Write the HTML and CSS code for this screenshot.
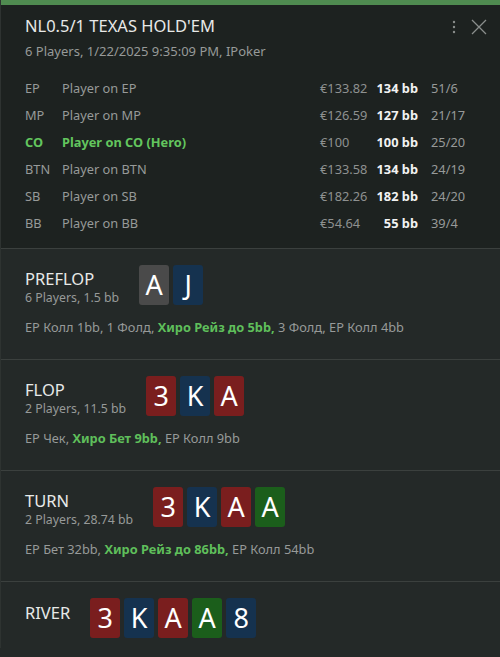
FILE: index.html
```html
<!DOCTYPE html>
<html>
<head>
<meta charset="utf-8">
<link rel="stylesheet" href="styles.css">
</head>
<body>
<div class="panel">
  <div class="topbar"></div>
  <header class="head">
    <div class="head-top">
      <div class="title">NL0.5/1 TEXAS HOLD'EM</div>
      <div class="tools">
        <svg class="dots" width="6" height="14" viewBox="0 0 6 14"><circle cx="3" cy="2" r="1.2" fill="#8a8e8c"/><circle cx="3" cy="7" r="1.2" fill="#8a8e8c"/><circle cx="3" cy="12" r="1.2" fill="#8a8e8c"/></svg>
        <svg class="close" width="16" height="16" viewBox="0 0 16 16"><path d="M1 1L15 15M15 1L1 15" stroke="#8a8e8c" stroke-width="1.3" fill="none"/></svg>
      </div>
    </div>
    <div class="sub">6 Players, 1/22/2025 9:35:09 PM, IPoker</div>
    <div class="players">
      <div class="row"><span class="pos">EP</span><span class="name">Player on EP</span><span class="money">€133.82</span><span class="bb">134 bb</span><span class="stat">51/6</span></div>
      <div class="row"><span class="pos">MP</span><span class="name">Player on MP</span><span class="money">€126.59</span><span class="bb">127 bb</span><span class="stat">21/17</span></div>
      <div class="row hero"><span class="pos">CO</span><span class="name">Player on CO (Hero)</span><span class="money">€100</span><span class="bb">100 bb</span><span class="stat">25/20</span></div>
      <div class="row"><span class="pos">BTN</span><span class="name">Player on BTN</span><span class="money">€133.58</span><span class="bb">134 bb</span><span class="stat">24/19</span></div>
      <div class="row"><span class="pos">SB</span><span class="name">Player on SB</span><span class="money">€182.26</span><span class="bb">182 bb</span><span class="stat">24/20</span></div>
      <div class="row"><span class="pos">BB</span><span class="name">Player on BB</span><span class="money">€54.64</span><span class="bb">55 bb</span><span class="stat">39/4</span></div>
    </div>
  </header>

  <section class="street">
    <div class="street-top">
      <div class="street-info">
        <div class="street-name">PREFLOP</div>
        <div class="street-sub">6 Players, 1.5 bb</div>
      </div>
      <div class="cards"><span class="card gray">A</span><span class="card blue">J</span></div>
    </div>
    <div class="actions">EP Колл 1bb, 1 Фолд, <b>Хиро Рейз до 5bb,</b> 3 Фолд, EP Колл 4bb</div>
  </section>

  <section class="street">
    <div class="street-top">
      <div class="street-info">
        <div class="street-name">FLOP</div>
        <div class="street-sub">2 Players, 11.5 bb</div>
      </div>
      <div class="cards"><span class="card red">3</span><span class="card blue">K</span><span class="card red">A</span></div>
    </div>
    <div class="actions">EP Чек, <b>Хиро Бет 9bb,</b> EP Колл 9bb</div>
  </section>

  <section class="street">
    <div class="street-top">
      <div class="street-info">
        <div class="street-name">TURN</div>
        <div class="street-sub">2 Players, 28.74 bb</div>
      </div>
      <div class="cards"><span class="card red">3</span><span class="card blue">K</span><span class="card red">A</span><span class="card green">A</span></div>
    </div>
    <div class="actions">EP Бет 32bb, <b>Хиро Рейз до 86bb,</b> EP Колл 54bb</div>
  </section>

  <section class="street last">
    <div class="street-top">
      <div class="street-info">
        <div class="street-name river">RIVER</div>
      </div>
      <div class="cards"><span class="card red">3</span><span class="card blue">K</span><span class="card red">A</span><span class="card green">A</span><span class="card blue">8</span></div>
    </div>
  </section>
</div>
</body>
</html>
```

FILE: styles.css
```css
* { box-sizing: border-box; }
html, body { margin: 0; padding: 0; }
body {
  width: 500px;
  height: 657px;
  overflow: hidden;
  background: #242928;
  font-family: "Noto Sans", "Open Sans", sans-serif;
  color: #a0a3a2;
}
.panel {
  width: 500px;
  border-left: 1px solid #2e3331;
}
.topbar {
  height: 5px;
  background: #4f8b50;
}
.head {
  background: #1d2220;
  padding: 9px 25px 11px 24px;
  border-bottom: 1px solid #3b403e;
}
.head-top {
  display: flex;
  justify-content: space-between;
  align-items: flex-start;
}
.title {
  font-size: 16.5px;
  color: #e8e9e8;
  line-height: 24px;
}
.tools {
  display: flex;
  align-items: center;
  gap: 14px;
  margin-top: 5px;
  margin-right: -12px;
}
.sub {
  font-size: 13px;
  line-height: 18px;
  margin-top: 4px;
  color: #979a99;
}
.players {
  margin-top: 15px;
}
.row {
  display: grid;
  grid-template-columns: 37px 1fr 50px 48px 57px;
  font-size: 12.8px;
  line-height: 27px;
  color: #979a99;
}
.row .money { color: #8e9190; }
.row .bb {
  text-align: right;
  font-weight: 700;
  color: #f2f2f2;
}
.row .stat { padding-left: 13px; }
.row.hero .pos, .row.hero .name {
  color: #63c65e;
  font-weight: 700;
}
.street {
  height: 111px;
  border-bottom: 1px solid #3b403e;
  padding: 16px 24px 0 24px;
}
.street.last {
  border-bottom: none;
  height: auto;
  padding-bottom: 10px;
}
.street-top {
  display: flex;
  align-items: flex-start;
  gap: 20px;
}
.street-name {
  font-size: 16.5px;
  color: #e8e9e8;
  line-height: 22px;
  margin-top: 3px;
}
.street-name.river { margin-top: 4px; }
.street-sub {
  font-size: 12.3px;
  line-height: 16px;
  color: #979a99;
}
.cards {
  display: flex;
  gap: 4px;
}
.card {
  width: 30px;
  height: 40px;
  border-radius: 3px;
  color: #ffffff;
  font-size: 27px;
  line-height: 40px;
  text-align: center;
}
.card.gray { background: #4a4a4a; }
.card.blue { background: #15324f; }
.card.red { background: #7a1e1e; }
.card.green { background: #1b5e1b; }
.actions {
  margin-top: 12px;
  font-size: 12.8px;
  color: #979a99;
}
.actions b {
  color: #5fbf5b;
  font-weight: 700;
}
```
